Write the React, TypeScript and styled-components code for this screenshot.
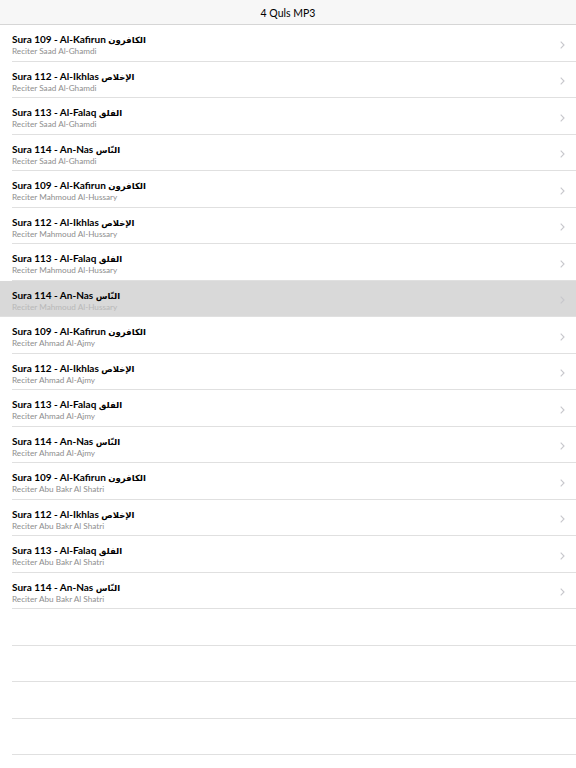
import React from 'react'
import styled, { createGlobalStyle } from 'styled-components'

const GlobalStyle = createGlobalStyle`
  html, body {
    margin: 0;
    padding: 0;
    background: #ffffff;
  }
  body {
    font-family: Lato, "Noto Sans", "DejaVu Sans", sans-serif;
  }
`

const Page = styled.div`
  width: 576px;
  height: 768px;
  overflow: hidden;
  background: #ffffff;
`

const NavBar = styled.header`
  height: 25px;
  background: #f7f7f7;
  border-bottom: 1px solid #d6d6d6;
  box-sizing: border-box;
  display: flex;
  justify-content: center;
  align-items: center;
`

const NavTitle = styled.h1`
  margin: 0;
  font-size: 10.5px;
  font-weight: 400;
  color: #000;
  padding-top: 1px;
`

const List = styled.ul`
  list-style: none;
  margin: 0;
  padding: 0;
`

const Row = styled.li<{ $selected?: boolean }>`
  height: 36.5px;
  box-sizing: border-box;
  display: flex;
  align-items: center;
  padding-left: 12px;
  background: ${p => (p.$selected ? '#d9d9d9' : '#ffffff')};
  position: relative;

  &::after {
    content: '';
    position: absolute;
    left: ${p => (p.$selected ? '0' : '12px')};
    right: 0;
    bottom: 0;
    height: 1px;
    background: #e0e0e0;
  }
`

const Texts = styled.div`
  flex: 1;
  display: flex;
  flex-direction: column;
  gap: 0;
  padding-top: 3px;
`

const Title = styled.div`
  font-size: 10px;
  font-weight: 700;
  color: #000;
  line-height: 12px;
  white-space: nowrap;
`

const Arabic = styled.span`
  font-family: "DejaVu Sans", "Noto Sans", sans-serif;
  font-weight: 700;
  font-size: 8.5px;
`

const Subtitle = styled.div<{ $selected?: boolean }>`
  font-size: 8.2px;
  color: ${p => (p.$selected ? '#b8b8b8' : '#8e8e8e')};
  line-height: 10px;
  white-space: nowrap;
`

const Chevron = styled.svg`
  width: 5px;
  height: 8px;
  margin-right: 11px;
  margin-top: 3px;
  flex: none;
`

const Empty = styled.div`
  height: 36.5px;
  position: relative;

  &::after {
    content: '';
    position: absolute;
    left: 12px;
    right: 0;
    bottom: 0;
    height: 1px;
    background: #e0e0e0;
  }
`

const suras = [
  { name: 'Sura 109 - Al-Kafirun', ar: 'الكافرون' },
  { name: 'Sura 112 - Al-Ikhlas', ar: 'الإخلاص' },
  { name: 'Sura 113 - Al-Falaq', ar: 'الفلق' },
  { name: 'Sura 114 - An-Nas', ar: 'النّاس' },
]

const reciters = ['Saad Al-Ghamdi', 'Mahmoud Al-Hussary', 'Ahmad Al-Ajmy', 'Abu Bakr Al Shatri']

const items = reciters.flatMap(r => suras.map(s => ({ ...s, reciter: r })))

export default function App() {
  return (
    <Page>
      <GlobalStyle />
      <NavBar>
        <NavTitle>4 Quls MP3</NavTitle>
      </NavBar>
      <List>
        {items.map((it, i) => {
          const selected = i === 7
          return (
            <Row key={i} $selected={selected}>
              <Texts>
                <Title>
                  {it.name} <Arabic>{it.ar}</Arabic>
                </Title>
                <Subtitle $selected={selected}>Reciter {it.reciter}</Subtitle>
              </Texts>
              <Chevron viewBox="0 0 5 8">
                <path d="M0.7 0.7 L4 4 L0.7 7.3" fill="none" stroke="#c7c7cc" strokeWidth="1.1" />
              </Chevron>
            </Row>
          )
        })}
      </List>
      <Empty />
      <Empty />
      <Empty />
      <Empty />
    </Page>
  )
}
